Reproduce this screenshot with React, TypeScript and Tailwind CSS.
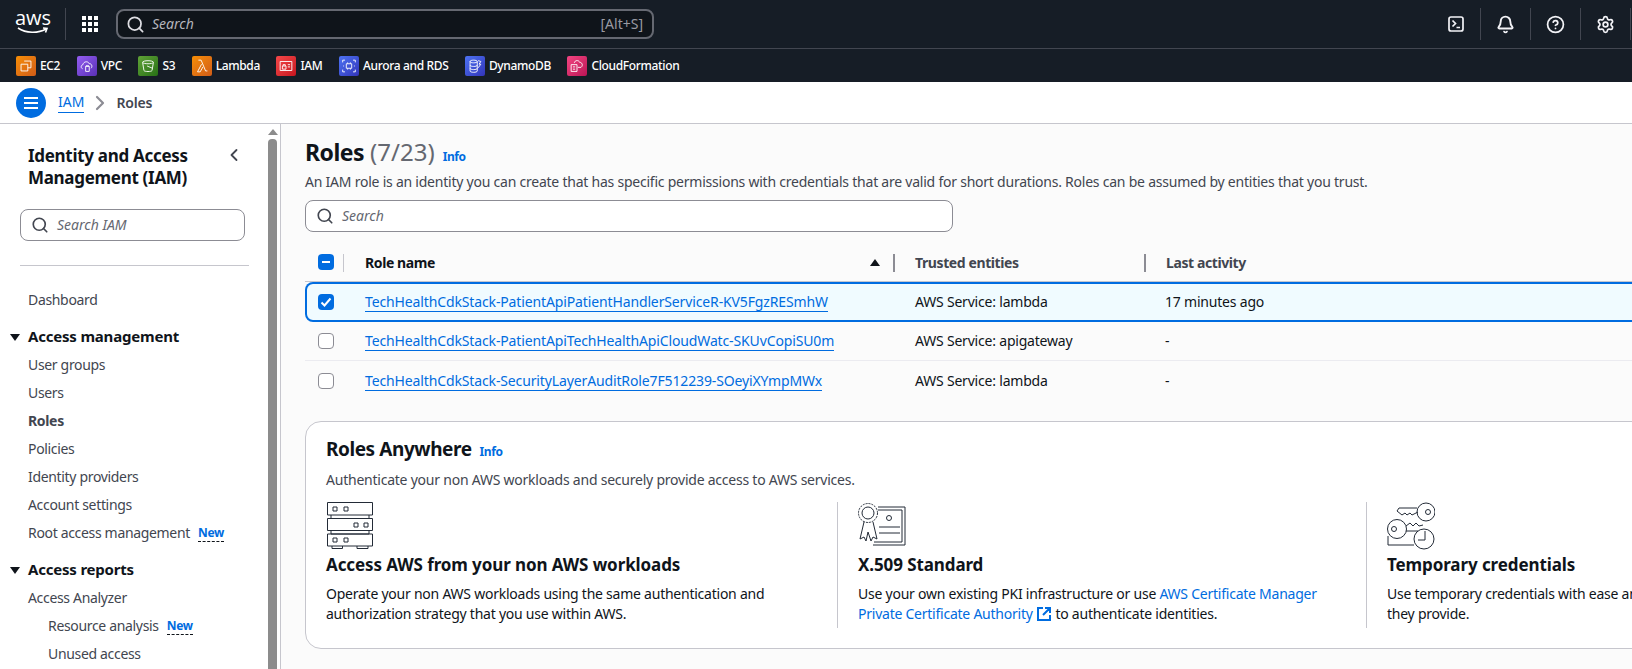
import { Bell, ChevronLeft, ChevronRight, CircleHelp, Search, Settings } from "lucide-react";
import type { ReactNode } from "react";

const SERVICES = [
  { label: "EC2", bg: "from-[#f78e04] to-[#d05c17]", icon: <path d="M8 4.5h7.5V12H12M4.5 8H12v7.5H4.5z" /> },
  { label: "VPC", bg: "from-[#945df2] to-[#5a30b5]", icon: <path d="M5 13c-2-.5-2-4 .5-4.5C6 5 11 4 12.500 7.500c2.500-.5 4 3 2 5M8.500 10.500h4v5.500h-4zM8.500 10.500c0-1.500 4-1.500 4 0" /> },
  { label: "S3", bg: "from-[#60a337] to-[#277116]", icon: <path d="M4 6c0-2.500 12-2.500 12 0l-1.500 9c-.5 1.500-8.500 1.500-9 0zM4 6c1 2 11 2 12 0M9 10l6 2.500" /> },
  { label: "Lambda", bg: "from-[#f78e04] to-[#d05c17]", icon: <path d="M6 3.500h3l5 12h2M9.500 8 5 16.500h3l3-5.500" /> },
  { label: "IAM", bg: "from-[#f54749] to-[#c7131f]", icon: <path d="M3.500 5h13v10h-13zM6 10h4v3.500H6zM6.800 10V8.500h2.400V10M12 8.500h2.500M12 11h2.500" /> },
  { label: "Aurora and RDS", bg: "from-[#4d72f3] to-[#3334b9]", icon: <path d="M7 7.500h6v5H7zM8.500 6v1.500M11.500 6v1.500M8.500 12.500V14M11.500 12.500V14M3 6V3.500h2.500M14.500 3.500H17V6M17 14v2.500h-2.500M5.500 16.500H3V14M4 9.500v1M16 9.500v1" /> },
  { label: "DynamoDB", bg: "from-[#4d72f3] to-[#3334b9]", icon: <path d="M4.500 5c0-2 8-2 8 0v10.500c0 2-8 2-8 0zM4.500 5c0 2 8 2 8 0M4.500 9c0 2 8 2 8 0M4.500 12.500c0 2 8 2 8 0M13.500 4l3 1-2 3h2l-3 4" /> },
  { label: "CloudFormation", bg: "from-[#f34482] to-[#bc1356]", icon: <path d="M3.500 8.500H10V16H3.500zM5.500 11H8M5.500 13.500H8M7 6.500C7.500 3.500 12 3 13 6c2-.5 4.500 3 1.500 5.500H11" /> },
];

const NAV_TOP = ["User groups", "Users", "Roles", "Policies", "Identity providers", "Account settings"];

const ROWS = [
  { name: "TechHealthCdkStack-PatientApiPatientHandlerServiceR-KV5FgzRESmhW", trusted: "AWS Service: lambda", last: "17 minutes ago", selected: true },
  { name: "TechHealthCdkStack-PatientApiTechHealthApiCloudWatc-SKUvCopiSU0m", trusted: "AWS Service: apigateway", last: "-", selected: false },
  { name: "TechHealthCdkStack-SecurityLayerAuditRole7F512239-SOeyiXYmpMWx", trusted: "AWS Service: lambda", last: "-", selected: false },
];

function NewBadge() {
  return <span className="ml-2 text-xs font-bold leading-4 tracking-[-0.3px] text-[#006ce0] border-b border-dashed border-[#0f141a]">New</span>;
}

function Triangle() {
  return <span className="w-0 h-0 border-x-[5px] border-x-transparent border-t-[7px] border-t-[#0f141a]" />;
}

function Checkbox({ state }: { state: "on" | "off" | "mixed" }) {
  if (state === "off") return <span className="block w-4 h-4 rounded-[4px] border border-[#8c8c94] bg-white" />;
  return (
    <span className="flex items-center justify-center w-4 h-4 rounded-[4px] bg-[#006ce0]">
      <svg viewBox="0 0 16 16" className="w-4 h-4" fill="none" stroke="#fff" strokeWidth="2">
        {state === "on" ? <path d="m3.500 8.500 3 3 6-7" /> : <path d="M4 8h8" />}
      </svg>
    </span>
  );
}

function SideRow({ children, className = "" }: { children: ReactNode; className?: string }) {
  return <div className={`flex items-center h-7 text-sm tracking-[-0.33px] text-[#424650] ${className}`}>{children}</div>;
}

function SideHeading({ label, className = "" }: { label: string; className?: string }) {
  return (
    <div className={`flex items-center h-7 pl-[10px] gap-2 text-[15px] font-bold tracking-[-0.2px] text-[#0f141a] ${className}`}>
      <Triangle />
      <span className="-mt-[2px]">{label}</span>
    </div>
  );
}

function Sidebar() {
  return (
    <aside className="flex w-[281px] shrink-0 h-full bg-white border-r border-[#c6c6cd] overflow-hidden">
      <div className="w-[268px] shrink-0 pt-[21px]">
        <div className="flex justify-between pl-[28px] pr-[24px]">
          <h2 className="text-[17px] leading-[22px] font-bold tracking-[-0.3px] text-[#0f141a]">
            Identity and Access
            <br />
            Management (IAM)
          </h2>
          <ChevronLeft className="w-5 h-5 text-[#424650]" strokeWidth={2.2} />
        </div>
        <div className="flex items-center gap-2 ml-5 mr-[23px] mt-5 h-8 pl-[10px] rounded-lg border border-[#8c8c94]">
          <Search className="w-[18px] h-[18px] text-[#424650]" strokeWidth={2.2} />
          <span className="text-sm italic text-[#656871]">Search IAM</span>
        </div>
        <div className="ml-5 mr-[19px] mt-6 border-t border-[#c6c6cd]" />
        <div className="mt-[20px]">
          <SideRow className="pl-[28px]">Dashboard</SideRow>
          <SideHeading label="Access management" className="mt-[9px]" />
          {NAV_TOP.map((item) => (
            <SideRow key={item} className={item === "Roles" ? "pl-[28px] font-bold text-[#006ce0]" : "pl-[28px]"}>
              {item}
            </SideRow>
          ))}
          <SideRow className="pl-[28px]">
            Root access management
            <NewBadge />
          </SideRow>
          <SideHeading label="Access reports" className="mt-[9px]" />
          <SideRow className="pl-[28px]">Access Analyzer</SideRow>
          <SideRow className="pl-[48px]">
            Resource analysis
            <NewBadge />
          </SideRow>
          <SideRow className="pl-[48px]">Unused access</SideRow>
        </div>
      </div>
      {/* fake scrollbar */}
      <div className="flex flex-col items-center w-[9px] shrink-0">
        <span className="mt-[5px] w-0 h-0 border-x-[5px] border-x-transparent border-b-[6px] border-b-[#8c8c8c]" />
        <span className="mt-[4px] flex-1 w-[9px] rounded-t-[4px] bg-[#8c8c8c]" />
      </div>
    </aside>
  );
}

function ServerIcon() {
  return (
    <svg viewBox="0 0 48 48" className="w-12 h-12" fill="none" stroke="#232b37" strokeWidth="1">
      <path d="M1.500.5h45v12.500h-45zM1.500 16.500h45v12h-45zM1.500 32h45v12h-45zM5 13v3.500h38V13M5 28.500V32h38v-3.500M6 44v2.500h10.500V44M31 44v2.500h11V44" />
      <path d="M7 5h4v4H7zM18 5h4v4h-4zM28 21h4v4h-4zM38 21h4v4h-4zM7 36h4v4H7zM18 36h4v4h-4z" />
    </svg>
  );
}

function CertIcon() {
  return (
    <svg viewBox="0 0 48 48" className="w-12 h-12" fill="none" stroke="#232b37" strokeWidth="1">
      <circle cx="10" cy="11" r="9.500" strokeDasharray="2 1" />
      <circle cx="10" cy="11" r="6" />
      <path d="M20 5h27v38H15M20 8h24v32H16M6 20 2 37l4-2 2 4 2-9 3 9 2-4 4 2-4-17" />
      <circle cx="31" cy="16" r="2.500" />
      <path d="M21 25h21M21 31h21" />
    </svg>
  );
}

function KeysIcon() {
  return (
    <svg viewBox="0 0 48 48" className="w-12 h-12" fill="none" stroke="#232b37" strokeWidth="1">
      <circle cx="39" cy="10" r="9" />
      <circle cx="41" cy="10" r="2.500" />
      <path d="M30 6H12l-2 3 5 4 3-2 2 2 3-2 2 2 6-3" />
      <circle cx="10" cy="27" r="9.500" />
      <circle cx="7" cy="27" r="2.500" />
      <path d="M19 29h12M19 24l4-3 3 3 3-3 3 3 4-1M1 34v9h26" />
      <circle cx="37" cy="37" r="10" />
      <path d="M38 29v9h-7" />
    </svg>
  );
}

function Info({ className = "" }: { className?: string }) {
  return <span className={`text-xs font-bold tracking-[-0.4px] text-[#006ce0] ${className}`}>Info</span>;
}

function Feature({ icon, title, children, className = "" }: { icon: ReactNode; title: string; children: ReactNode; className?: string }) {
  return (
    <div className={`shrink-0 ${className}`}>
      {icon}
      <h3 className="mt-[3px] text-[17px] leading-6 font-bold tracking-[-0.1px] text-[#0f141a]">{title}</h3>
      <p className="mt-[7px] text-sm leading-5 tracking-[-0.24px] text-[#0f141a]">{children}</p>
    </div>
  );
}

export default function App() {
  return (
    <div className="flex flex-col w-[1632px] h-[669px] overflow-hidden bg-[#fbfbfb] font-['Noto_Sans','Open_Sans',sans-serif]">
      {/* top nav */}
      <header className="flex items-center shrink-0 h-[49px] bg-[#161d26] border-b border-[#424650]">
        <div className="flex flex-col items-center ml-[17px] w-8 h-8 text-white">
          <span className="text-[20px] leading-[20px] font-['Open_Sans',sans-serif]">aws</span>
          <svg viewBox="0 0 32 8" className="w-8 h-2 -mt-[1px]" fill="none" stroke="#fff" strokeWidth="1.600">
            <path d="M1 1c8 5.500 20 5.500 28 1M26 1l4 .5-1.500 4" />
          </svg>
        </div>
        <span className="ml-4 w-px h-8 bg-[#424650]" />
        <svg viewBox="0 0 16 16" className="ml-4 w-4 h-4" fill="#fff">
          <path d="M0 0h4v4H0zM6 0h4v4H6zM12 0h4v4h-4zM0 6h4v4H0zM6 6h4v4H6zM12 6h4v4h-4zM0 12h4v4H0zM6 12h4v4H6zM12 12h4v4h-4z" />
        </svg>
        <div className="flex items-center ml-[18px] w-[538px] h-[30px] pl-2 pr-[9px] rounded-lg border-2 border-[#656871] bg-[#0f141a]">
          <Search className="w-[19px] h-[19px] text-[#dedee3]" strokeWidth={2.2} />
          <span className="ml-[7px] text-sm italic text-[#b4b4bb]">Search</span>
          <span className="ml-auto text-sm text-[#9a9aa2]">[Alt+S]</span>
        </div>
        <div className="flex ml-auto mr-px">
          <div className="flex items-center justify-center w-[50px] h-8 border-r border-[#424650] text-[#f3f3f7]">
            <svg viewBox="0 0 16 16" className="w-4 h-4" fill="none" stroke="currentColor" strokeWidth="1.700">
              <rect x="1" y="1" width="14" height="14" rx="2" />
              <path d="m4.500 4.500 3 3-3 3M8.500 11.500H12" />
            </svg>
          </div>
          <div className="flex items-center justify-center w-[50px] h-8 border-r border-[#424650] text-[#f3f3f7]">
            <Bell className="w-[19px] h-[19px]" strokeWidth={2.4} />
          </div>
          <div className="flex items-center justify-center w-[50px] h-8 border-r border-[#424650] text-[#f3f3f7]">
            <CircleHelp className="w-[19px] h-[19px]" strokeWidth={2.2} />
          </div>
          <div className="flex items-center justify-center w-[50px] h-8 border-r border-[#424650] text-[#f3f3f7]">
            <Settings className="w-[19px] h-[19px]" strokeWidth={2.2} />
          </div>
        </div>
      </header>

      {/* favourites bar */}
      <nav className="flex items-center shrink-0 h-[33px] pl-4 gap-[16.5px] bg-[#161d26]">
        {SERVICES.map((s) => (
          <div key={s.label} className="flex items-center gap-1">
            <span className={`flex items-center justify-center w-5 h-5 rounded-[2px] bg-linear-to-br ${s.bg}`}>
              <svg viewBox="0 0 20 20" className="w-[18px] h-[18px]" fill="none" stroke="#fff" strokeWidth="1">
                {s.icon}
              </svg>
            </span>
            <span className="text-xs font-medium tracking-[-0.35px] text-white">{s.label}</span>
          </div>
        ))}
      </nav>

      {/* breadcrumbs */}
      <div className="flex items-center shrink-0 h-[42px] bg-white border-b border-[#c6c6cd]">
        <span className="flex items-center justify-center ml-4 w-[30px] h-[30px] rounded-full bg-[#006ce0]">
          <svg viewBox="0 0 16 16" className="w-4 h-4" fill="none" stroke="#fff" strokeWidth="2">
            <path d="M1 3h14M1 8h14M1 13h14" />
          </svg>
        </span>
        <span className="ml-3 text-sm text-[#006ce0] border-b border-[#006ce0]">IAM</span>
        <ChevronRight className="ml-1 w-6 h-6 text-[#8c8c94]" strokeWidth={2.2} />
        <span className="ml-1 text-sm font-semibold tracking-[-0.2px] text-[#424650]">Roles</span>
      </div>

      <div className="flex flex-1 min-h-0">
        <Sidebar />

        <main className="flex-1 min-w-0 overflow-hidden pl-6 pt-[13px]">
          <div className="w-[1700px]">
            <div className="flex items-baseline h-[30px]">
              <h1 className="text-[23px] leading-[30px] font-bold tracking-[-0.5px] text-[#0f141a]">Roles</h1>
              <span className="ml-[6px] text-2xl leading-[30px] text-[#656871]">(7/23)</span>
              <Info className="ml-2" />
            </div>
            <p className="mt-[5px] text-sm leading-5 tracking-[-0.23px] text-[#424650]">
              An IAM role is an identity you can create that has specific permissions with credentials that are valid for short durations. Roles can be assumed by entities that you trust.
            </p>
            <div className="flex items-center gap-2 mt-2 w-[648px] h-8 pl-[10px] rounded-lg border border-[#8c8c94] bg-white">
              <Search className="w-[18px] h-[18px] text-[#424650]" strokeWidth={2.2} />
              <span className="text-sm italic text-[#656871]">Search</span>
            </div>

            {/* table */}
            <div className="mt-3">
              <div className="grid grid-cols-[39px_549px_251px_1fr] items-center h-[38px] border-b border-[#c6c6cd] text-sm font-bold tracking-[-0.4px]">
                <div className="flex justify-end h-[18px] border-r border-[#c6c6cd]">
                  <span className="mr-[9px]">
                    <Checkbox state="mixed" />
                  </span>
                </div>
                <div className="flex items-center justify-between h-[18px] pl-[21px] pr-[13px] text-[#0f141a]">
                  Role name
                  <span className="w-0 h-0 border-x-[5px] border-x-transparent border-b-[7px] border-b-[#0f141a]" />
                </div>
                <div className="flex items-center h-[18px] pl-5 border-l-2 border-[#8c8c94] text-[#424650]">Trusted entities</div>
                <div className="flex items-center h-[18px] pl-5 border-l-2 border-[#8c8c94] text-[#424650]">Last activity</div>
              </div>
              {ROWS.map((r) => (
                <div
                  key={r.name}
                  className={
                    r.selected
                      ? "grid grid-cols-[39px_549px_251px_1fr] items-center h-10 rounded-l-lg bg-[#f0fbff] shadow-[inset_0_0_0_2px_#006ce0] text-sm tracking-[-0.2px] text-[#0f141a]"
                      : "grid grid-cols-[39px_549px_251px_1fr] items-center h-[39px] border-b border-[#ebebf0] last:border-b-0 text-sm tracking-[-0.2px] text-[#0f141a]"
                  }
                >
                  <div className="pl-[13px]">
                    <Checkbox state={r.selected ? "on" : "off"} />
                  </div>
                  <div className="pl-[21px]">
                    <span className="tracking-[-0.13px] text-[#006ce0] border-b border-[#006ce0]">{r.name}</span>
                  </div>
                  <div className="pl-[22px]">{r.trusted}</div>
                  <div className="pl-[21px]">{r.last}</div>
                </div>
              ))}
            </div>

            {/* roles anywhere */}
            <section className="mt-[21px] px-5 pt-[15px] pb-5 rounded-2xl border border-[#c6c6cd] bg-white">
              <div className="flex items-baseline h-6">
                <h2 className="text-[19px] leading-6 font-bold tracking-[-0.43px] text-[#0f141a]">Roles Anywhere</h2>
                <Info className="ml-2" />
              </div>
              <p className="mt-[9px] text-sm leading-5 tracking-[-0.23px] text-[#424650]">
                Authenticate your non AWS workloads and securely provide access to AWS services.
              </p>
              <div className="flex mt-3 h-[126px]">
                <Feature icon={<ServerIcon />} title="Access AWS from your non AWS workloads" className="w-[511px]">
                  Operate your non AWS workloads using the same authentication and
                  <br />
                  authorization strategy that you use within AWS.
                </Feature>
                <Feature icon={<CertIcon />} title="X.509 Standard" className="w-[529px] pl-5 border-l border-[#c6c6cd]">
                  Use your own existing PKI infrastructure or use <span className="text-[#006ce0]">AWS Certificate Manager</span>
                  <br />
                  <span className="text-[#006ce0]">Private Certificate Authority</span>{" "}
                  <svg viewBox="0 0 16 16" className="inline-block w-4 h-4 align-[-3px]" fill="none" stroke="#006ce0" strokeWidth="2">
                    <path d="M7 2H2v12h12V9M9 2h5v5M14 2 7 9" />
                  </svg>{" "}
                  to authenticate identities.
                </Feature>
                <Feature icon={<KeysIcon />} title="Temporary credentials" className="w-[529px] pl-5 border-l border-[#c6c6cd]">
                  Use temporary credentials with ease and
                  <br />
                  they provide.
                </Feature>
              </div>
            </section>
          </div>
        </main>
      </div>
    </div>
  );
}
